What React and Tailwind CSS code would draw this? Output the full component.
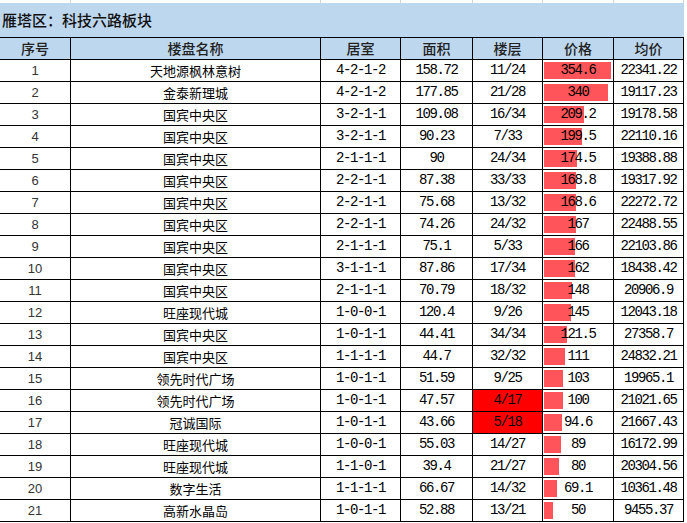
import React from "react";

const rows = [
  [1, "天地源枫林意树", "4-2-1-2", "158.72", "11/24", 354.6, "22341.22"],
  [2, "金泰新理城", "4-2-1-2", "177.85", "21/28", 340, "19117.23"],
  [3, "国宾中央区", "3-2-1-1", "109.08", "16/34", 209.2, "19178.58"],
  [4, "国宾中央区", "3-2-1-1", "90.23", "7/33", 199.5, "22110.16"],
  [5, "国宾中央区", "2-1-1-1", "90", "24/34", 174.5, "19388.88"],
  [6, "国宾中央区", "2-2-1-1", "87.38", "33/33", 168.8, "19317.92"],
  [7, "国宾中央区", "2-2-1-1", "75.68", "13/32", 168.6, "22272.72"],
  [8, "国宾中央区", "2-2-1-1", "74.26", "24/32", 167, "22488.55"],
  [9, "国宾中央区", "2-1-1-1", "75.1", "5/33", 166, "22103.86"],
  [10, "国宾中央区", "3-1-1-1", "87.86", "17/34", 162, "18438.42"],
  [11, "国宾中央区", "2-1-1-1", "70.79", "18/32", 148, "20906.9"],
  [12, "旺座现代城", "1-0-0-1", "120.4", "9/26", 145, "12043.18"],
  [13, "国宾中央区", "1-0-1-1", "44.41", "34/34", 121.5, "27358.7"],
  [14, "国宾中央区", "1-1-1-1", "44.7", "32/32", 111, "24832.21"],
  [15, "领先时代广场", "1-0-1-1", "51.59", "9/25", 103, "19965.1"],
  [16, "领先时代广场", "1-0-1-1", "47.57", "4/17", 100, "21021.65"],
  [17, "冠诚国际", "1-0-1-1", "43.66", "5/18", 94.6, "21667.43"],
  [18, "旺座现代城", "1-0-0-1", "55.03", "14/27", 89, "16172.99"],
  [19, "旺座现代城", "1-1-0-1", "39.4", "21/27", 80, "20304.56"],
  [20, "数字生活", "1-1-1-1", "66.67", "14/32", 69.1, "10361.48"],
  [21, "高新水晶岛", "1-0-1-1", "52.88", "13/21", 50, "9455.37"],
];

const headers = ["序号", "楼盘名称", "居室", "面积", "楼层", "价格", "均价"];
const cols = "grid grid-cols-[71px_250px_80px_72px_70px_71px_70px]";
const cell = "h-[22px] border-r border-b border-black flex items-center justify-center";
const mono = "font-['Liberation_Mono',monospace] text-[14px] tracking-[-1.4px] text-black";
const cjk = "font-['Noto_Sans_CJK_SC',sans-serif] text-[13px] text-black";
const maxPrice = 354.6;

export default function App() {
  return (
    <div className="w-[687px] h-[523px] bg-white overflow-hidden">
      {/* leftover row of the sheet above */}
      <div className={cols + " h-[3px]"}>
        {headers.map((h) => (
          <div key={h} className="border-r border-[#d4d4d4]" />
        ))}
      </div>

      {/* title */}
      <div className="w-[684px] h-[34px] bg-[#bdd7ee] flex items-center pl-[2px]">
        <span className="font-['Noto_Sans_CJK_SC',sans-serif] text-[15px] font-medium text-[#111]">
          雁塔区：科技六路板块
        </span>
      </div>

      {/* header row */}
      <div className={cols + " border-t border-black w-[684px]"}>
        {headers.map((h) => (
          <div
            key={h}
            className={cell + " bg-[#bdd7ee] font-['Noto_Sans_CJK_SC',sans-serif] text-[14px] font-medium text-[#222]"}
          >
            {h}
          </div>
        ))}
      </div>

      {/* data rows */}
      {rows.map((r) => {
        const [no, name, room, area, floor, price, avg] = r;
        const hot = no === 16 || no === 17;
        return (
          <div key={no} className={cols + " w-[684px]"}>
            <div className={cell + " font-['Liberation_Sans',sans-serif] text-[13px] text-[#333]"}>{no}</div>
            <div className={cell + " " + cjk}>{name}</div>
            <div className={cell + " " + mono}>{room}</div>
            <div className={cell + " " + mono}>{area}</div>
            <div className={cell + " " + mono + (hot ? " bg-[#ff0000] text-[#2a0000]" : "")}>{floor}</div>
            <div className={cell + " relative " + mono}>
              <div
                className="absolute left-[1px] top-[2px] bottom-[2px] bg-[#ff555a]"
                style={{ width: (price / maxPrice) * 67 + "px" }}
              />
              <span className="relative">{price}</span>
            </div>
            <div className={cell + " " + mono}>{avg}</div>
          </div>
        );
      })}
    </div>
  );
}
